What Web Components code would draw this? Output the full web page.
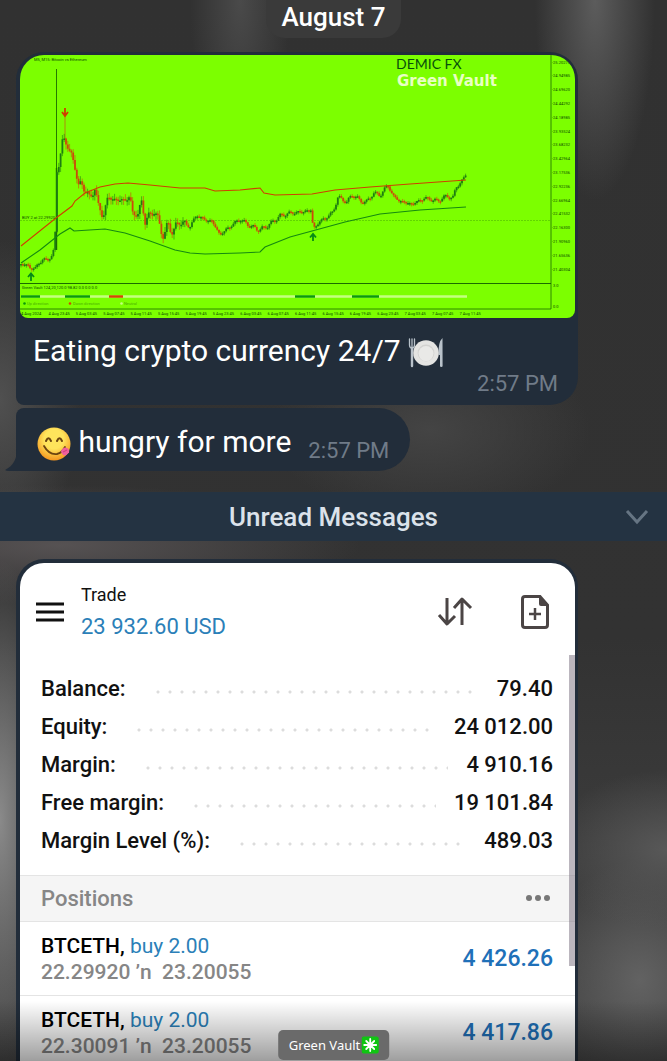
<!DOCTYPE html>
<html lang="en">
<head>
<meta charset="utf-8">
<meta name="viewport" content="width=device-width, initial-scale=1">
<title>Green Vault</title>
<style>
  body {
    margin: 0;
    height: 100vh;
    overflow: hidden;
    font-family: Roboto, "Liberation Sans", sans-serif;
    background: #333;
  }
</style>
</head>
<body>

<chat-screen>
  <chat-date>August 7</chat-date>

  <chat-bubble class="wide" time="2:57 PM">
    <price-chart slot="media"></price-chart>
    Eating crypto currency 24/7 <emoji-icon name="plate"></emoji-icon>
  </chat-bubble>

  <chat-bubble class="short" tail time="2:57 PM">
    <emoji-icon name="yum"></emoji-icon> hungry for more
  </chat-bubble>

  <unread-bar>Unread Messages</unread-bar>

  <trade-panel name="Trade" total="23 932.60 USD">
    <balance-row slot="balance" label="Balance:">79.40</balance-row>
    <balance-row slot="balance" label="Equity:">24 012.00</balance-row>
    <balance-row slot="balance" label="Margin:">4 910.16</balance-row>
    <balance-row slot="balance" label="Free margin:">19 101.84</balance-row>
    <balance-row slot="balance" label="Margin Level (%):">489.03</balance-row>
    <position-row symbol="BTCETH," side="buy 2.00" prices="22.29920 ’n&nbsp; 23.20055">4 426.26</position-row>
    <position-row symbol="BTCETH," side="buy 2.00" prices="22.30091 ’n&nbsp; 23.20055">4 417.86</position-row>
  </trade-panel>

  <caption-chip slot="overlay">Green Vault</caption-chip>
</chat-screen>

<script>
/* shared base: every element renders its own html into an open root */
class BaseElement extends HTMLElement {
  constructor() {
    super();
    this.shadow = this.attachShadow({mode: 'open'});
    this.shadow.innerHTML = this.render();
  }

  att(key) {
    return this.getAttribute(key) || '';
  }
}

class ChatScreen extends BaseElement {
  render() {
    return `
      <style>
        :host {
          display: block;
          position: relative;
          height: 100vh;
          overflow: hidden;
          background:
            radial-gradient(ellipse 50px 160px at 240px 0, #4a4a4a, transparent),
            radial-gradient(ellipse 60px 200px at 595px 0, #5c5c5c, transparent),
            radial-gradient(ellipse 120px 80px at 100% 850px, #585858, transparent),
            radial-gradient(ellipse 100px 120px at 640px 980px, #626262, transparent),
            radial-gradient(ellipse 60px 260px at 0 820px, #8a8a8a, transparent),
            radial-gradient(ellipse 300px 60px at 60px 545px, #565253, transparent),
            radial-gradient(ellipse 160px 90px at 430px 430px, #444, transparent),
            radial-gradient(ellipse 80px 160px at 0 400px, #505050, transparent),
            linear-gradient(#313131, #323232 60%, #454545);
        }
        .shade {
          position: absolute;
          inset: auto 0 0 0;
          height: 60px;
          background: linear-gradient(transparent, rgba(0, 0, 0, 0.38));
          pointer-events: none;
        }
      </style>
      <slot></slot>
      <div class="shade"></div>
      <slot name="overlay"></slot>
    `;
  }
}

class ChatDate extends BaseElement {
  render() {
    return `
      <style>
        :host {
          display: flex;
          justify-content: center;
          margin-bottom: 14px;
        }
        time {
          padding: 0 15px 4px;
          border-radius: 0 0 19px 19px;
          background: #3a3a3a;
          color: #fff;
          font-size: 26px;
          font-weight: 500;
          line-height: 34px;
        }
      </style>
      <time><slot></slot></time>
    `;
  }
}

class ChatBubble extends BaseElement {
  render() {
    return `
      <style>
        :host {
          display: flex;
          position: relative;
          box-sizing: border-box;
          margin-left: 16px;
          background: #222d3a;
          color: #fff;
          font-size: 30px;
          line-height: 34px;
        }
        :host(.wide) {
          flex-direction: column;
          margin-right: 89px;
          margin-bottom: 3px;
          padding: 3px 3px 7px 4px;
          border-radius: 28px 28px 28px 8px;
        }
        :host(.short) {
          width: fit-content;
          margin-bottom: 21px;
          padding: 17px 21px 12px;
          gap: 17px;
          border-radius: 8px 32px 32px 0;
        }
        :host(.wide) p { padding: 16px 13px 2px; }
        :host(.wide) time { align-self: flex-end; padding-right: 17px; }
        :host(.short) time { align-self: flex-end; margin-bottom: -6px; }
        p { margin: 0; }
        time {
          color: #707b88;
          font-size: 22px;
          line-height: 28px;
        }
        .tail {
          position: absolute;
          right: 100%;
          bottom: 0;
          margin-right: -1px;
          fill: #222d3a;
        }
      </style>
      <slot name="media"></slot>
      <p><slot></slot></p>
      <time>${this.att('time')}</time>
      ${this.hasAttribute('tail') ? `
        <svg class="tail" width="12" height="22"><path d="M12 0C12 10 8 17 0 21Q1 22 4 22H12Z"/></svg>` : ''}
    `;
  }
}

const EMOJI = {
  plate: `
    <svg width="36" height="32" viewBox="0 0 36 32">
      <g fill="none" stroke="#b9c2ca" stroke-linecap="round">
        <path d="M1.5 2V8Q1.5 11 4 11Q6.500 11 6.500 8V2M4 2V11" stroke-width="1.300"/>
        <path d="M4 11V29" stroke-width="2.400"/>
      </g>
      <path d="M34.500 1Q30 5 30.500 18H32V29Q32 30 33.300 30T34.600 29Z" fill="#b9c2ca"/>
      <circle cx="18" cy="16" r="12.800" fill="#e4e4e2"/>
      <circle cx="18" cy="16" r="8.400" fill="#d2d2d0"/>
      <circle cx="18" cy="16.600" r="7.500" fill="#e9e9e7"/>
    </svg>`,
  yum: `
    <svg width="34" height="34" viewBox="0 0 34 34">
      <defs>
        <radialGradient id="face" cx="50%" cy="35%" r="65%">
          <stop offset="0.450" stop-color="#ffe45c"/>
          <stop offset="1" stop-color="#f4961f"/>
        </radialGradient>
      </defs>
      <circle cx="17" cy="17" r="16.500" fill="url(#face)"/>
      <path d="M9 14Q11.500 8.500 14 14M20 14Q22.500 8.500 25 14" fill="none" stroke="#6b4410" stroke-width="2" stroke-linecap="round"/>
      <path d="M7 19Q12 28 20 27Q25 26 28 20" fill="none" stroke="#6b4410" stroke-width="1.800" stroke-linecap="round"/>
      <path d="M24 25Q24 22 28 20.500Q33 21 32 25.500Q29 29.500 26 28Z" fill="#f0609c"/>
      <path d="M26 25L30 23" stroke="#cf3d7c"/>
    </svg>`
};

class EmojiIcon extends BaseElement {
  render() {
    return `
      <style>
        :host { display: inline-block; vertical-align: middle; margin: -4px 0; line-height: 0; }
      </style>
      ${EMOJI[this.att('name')]}
    `;
  }
}

/* price path, one [x, y] per swing; candles are filled in between */
const PRICE = [
  [21,264],[28,265],[31,269],[35,269],[38,263],[44,260],[52,257],[54,250],[56,220],[57,170],[60,160],
  [63,140],[65,138],[67,142],[70,155],[73,160],[76,168],[78,187],[82,185],[86,190],[90,200],[95,187],
  [98,205],[103,217],[108,197],[115,200],[125,200],[130,197],[132,212],[138,215],[142,200],[145,222],
  [150,215],[154,210],[160,226],[164,237],[168,224],[173,232],[180,220],[185,225],[190,226],[197,215],
  [205,220],[212,221],[220,235],[228,228],[240,219],[250,226],[260,230],[270,224],[280,216],[290,213],
  [300,212],[311,210],[313,226],[315,228],[320,221],[327,217],[333,212],[338,197],[347,202],[353,194],
  [360,201],[367,202],[373,193],[380,195],[388,185],[393,196],[400,201],[412,204],[425,198],[437,201],
  [447,196],[453,198],[457,185],[463,181],[467,171]
];

const SCALE = [
  '25.20275', '24.94985', '24.69620', '24.44292', '24.18985', '23.93524', '23.68232', '23.42964',
  '23.17536', '22.92236', '22.66964', '22.41532', '22.16300', '21.90960', '21.65636', '21.40304'
];

const DATES = [
  '4 Aug 2024', '4 Aug 23:45', '5 Aug 03:45', '5 Aug 07:45', '5 Aug 11:45', '5 Aug 15:45', '5 Aug 19:45',
  '5 Aug 23:45', '6 Aug 03:45', '6 Aug 07:45', '6 Aug 11:45', '6 Aug 15:45', '6 Aug 19:45', '6 Aug 23:45',
  '7 Aug 03:45', '7 Aug 07:45', '7 Aug 11:45'
];

const UP = '#1d7d12';
const DOWN = '#cc4a0a';

class PriceChart extends BaseElement {
  candles() {
    let out = '', prev = PRICE[0][1], seg = 0, n = 0;
    for (let x = 21; x <= 467; x += 1.8) {
      while (seg < PRICE.length - 2 && PRICE[seg + 1][0] < x) seg++;
      const [x1, y1] = PRICE[seg];
      const [x2, y2] = PRICE[seg + 1];
      const rough = x > 58 && x < 185;
      const wobble = Math.sin(n * 1.3) * (rough ? 3 : 1.5) + Math.sin(n * 5.1) * (rough ? 2 : 1);
      const y = y1 + (y2 - y1) * (x - x1) / (x2 - x1) + wobble;
      const color = y > prev ? DOWN : UP;
      const top = Math.min(y, prev);
      const height = Math.max(Math.abs(y - prev), 1.5);
      const wick = rough ? 5 : 2;
      out += `<path d="M${x} ${top - wick * Math.abs(Math.sin(n))}V${top + height + wick * Math.abs(Math.cos(n))}" stroke="${color}" stroke-width="0.6"/>`;
      out += `<path d="M${x} ${top}v${height}" stroke="${color}" stroke-width="1.8"/>`;
      prev = y;
      n++;
    }
    return out;
  }

  render() {
    return `
      <style>
        :host { display: block; }
        svg {
          display: block;
          width: 100%;
          border-radius: 24px 24px 8px 8px;
          background: #7cff00;
        }
        .tiny { font-size: 4px; fill: #0b4a00; }
        .brand { font: 14px Lato, sans-serif; fill: #064f0c; }
        .vault { font: bold 15px "DejaVu Sans", sans-serif; fill: #e9ffc4; }
      </style>
      <svg viewBox="20 55 555 263" role="img" aria-label="BTCETH chart">
        <g fill="none" stroke="#1b6b00">
          <path d="M551 55V309M20 309H551" stroke-width="0.800"/>
          <path d="M20 283.500H551" stroke-width="1.200"/>
          <path d="M20 220.500H551" stroke="#4fb800" stroke-width="0.600" stroke-dasharray="2 1"/>
          <path d="M56.500 69V250" stroke-width="0.900"/>
          <path d="M56.500 168V250" stroke-width="1.400"/>
          <path d="M65 116V140" stroke="#b8700f" stroke-width="0.800"/>
        </g>
        ${this.candles()}
        <path fill="none" stroke="#cf3f00" stroke-width="1.100" d="M21 246L56 218L72 206L75 201L85 193L100 187L115 184L128 183L150 185L180 188L205 188L215 191L240 190L260 188L264 193L275 195L312 194L335 190L370 187L410 184L466 180"/>
        <path fill="none" stroke="#158a10" stroke-width="1.100" d="M21 263L40 250L60 234L70 228L74 231L105 229L125 233L150 241L175 250L190 253L205 254L240 253L260 252L265 247L290 237L312 231L345 222L380 214L420 210L466 207"/>
        <path d="M65 108V115M62 112L65 116L68 112" fill="none" stroke="#d13c00" stroke-width="1.800"/>
        <path d="M31 281V274M28 277L31 273.500L34 277M313 241V235M310 237.500L313 234L316 237.500" fill="none" stroke="#078a18" stroke-width="1.800"/>

        <path d="M21 296.500H467" stroke="#c4ff80" stroke-width="2.400"/>
        <path d="M21 296.500H40M65 296.500H90M295 296.500H315M352 296.500H379" stroke="#0a9a0a" stroke-width="2.600"/>
        <path d="M109 296.500H123" stroke="#d14a00" stroke-width="2.600"/>

        <g class="tiny">
          <text x="34" y="61">M5, M15:  Bitcoin vs Ethereum</text>
          <text x="22" y="219">BUY 2 at 22.29920</text>
          <text x="22" y="289">Green Vault 124,20,120.0 98.82 0.0 0.0 0.0</text>
          <circle cx="24.500" cy="303.500" r="1.300" fill="#0a9a0a"/>
          <text x="27" y="305" fill-opacity="0.500">Up direction</text>
          <circle cx="70" cy="303.500" r="1.300" fill="#d14a00"/>
          <text x="73" y="305" fill-opacity="0.500">Down direction</text>
          <circle cx="121.500" cy="303.500" r="1.300" fill="#c4ff80"/>
          <text x="124" y="305" fill-opacity="0.500">Neutral</text>
          ${SCALE.map((s, i) => `<text x="552" y="${63.5 + i * 13.8}">-${s}</text>`).join('')}
          <text x="553" y="287">3.0</text>
          <text x="553" y="308">0.0</text>
          ${DATES.map((d, i) => `<text x="${21 + i * 27.4}" y="315">${d}</text>`).join('')}
        </g>
        <text class="brand" x="396" y="69">DEMIC FX</text>
        <text class="vault" x="397" y="86">Green Vault</text>
      </svg>
    `;
  }
}

class UnreadBar extends BaseElement {
  render() {
    return `
      <style>
        :host {
          display: grid;
          grid-template-columns: 1fr auto 1fr;
          align-items: center;
          margin-bottom: 18px;
          padding: 0 18px;
          height: 49px;
          background: #243342;
          color: #dbe2ea;
          font-size: 26px;
          font-weight: 500;
        }
        span { grid-column: 2; }
        button {
          justify-self: end;
          padding: 0;
          border: 0;
          background: none;
          line-height: 0;
          cursor: pointer;
        }
      </style>
      <span><slot></slot></span>
      <button type="button" aria-label="Jump to latest">
        <svg width="24" height="16" viewBox="0 0 24 16"><path d="M2 2L12 13L22 2" fill="none" stroke="#667583" stroke-width="3"/></svg>
      </button>
    `;
  }
}

class TradePanel extends BaseElement {
  render() {
    return `
      <style>
        :host {
          display: block;
          position: relative;
          margin: 0 89px 0 16px;
          padding: 4px 3px 0 4px;
          border-radius: 28px 28px 0 0;
          background: #222d3a;
          color: #111;
        }
        section {
          overflow: hidden;
          border-radius: 24px 24px 0 0;
          background: #fff;
        }
        header {
          display: flex;
          align-items: flex-start;
          height: 86px;
          padding: 20px 26px 0 16px;
          gap: 17px;
        }
        h2, h3, p { margin: 0; font-weight: 400; }
        h2 { font-size: 18px; line-height: 24px; }
        header p { padding-top: 5px; color: #2b7fb8; font-size: 22px; line-height: 30px; }
        header > div { flex: 1; }
        button {
          padding: 0;
          border: 0;
          background: none;
          line-height: 0;
          cursor: pointer;
        }
        .menu { padding-top: 18px; }
        .sort { padding: 13px 31px 0 0; }
        .new { padding-top: 11px; }
        .balances { padding: 0 22px 16px 21px; }
        .bar {
          display: flex;
          justify-content: space-between;
          align-items: center;
          height: 44px;
          padding: 1px 24px 0 21px;
          box-sizing: content-box;
          border: solid #e4e4e4;
          border-width: 1px 0;
          background: #f5f5f5;
          color: #868686;
        }
        h3 { font-size: 22px; font-weight: 500; line-height: 26px; }
        .thumb {
          position: absolute;
          top: 96px;
          right: 3px;
          width: 6px;
          height: 311px;
          background: rgba(120, 110, 125, 0.5);
        }
      </style>
      <section>
        <header>
          <button class="menu" type="button" aria-label="Menu">
            <svg width="28" height="22"><path d="M0 3H28M0 11H28M0 19H28" stroke="#111" stroke-width="3"/></svg>
          </button>
          <div>
            <h2>${this.att('name')}</h2>
            <p>${this.att('total')}</p>
          </div>
          <button class="sort" type="button" aria-label="Sort">
            <svg width="36" height="32" viewBox="0 0 36 32"><path d="M10 2V28M2 19L10 28L18 20M25 29V3M17 12L25 3L34 12" fill="none" stroke="#4b4545" stroke-width="3" stroke-linejoin="round"/></svg>
          </button>
          <button class="new" type="button" aria-label="New order">
            <svg width="28" height="36" viewBox="0 0 28 36">
              <path d="M4 2.500H19L26.500 11V31Q26.500 33.500 24 33.500H4Q1.500 33.500 1.500 31V5Q1.500 2.500 4 2.500Z" fill="none" stroke="#4b4545" stroke-width="3"/>
              <path d="M18 2L27 12H20Q18 12 18 10Z" fill="#4b4545"/>
              <path d="M8 20H20M14 14V26" stroke="#4b4545" stroke-width="2.500"/>
            </svg>
          </button>
        </header>
        <div class="balances"><slot name="balance"></slot></div>
        <div class="bar">
          <h3>Positions</h3>
          <button type="button" aria-label="More">
            <svg width="26" height="8" fill="#777"><circle cx="4" cy="3" r="3"/><circle cx="13" cy="3" r="3"/><circle cx="22" cy="3" r="3"/></svg>
          </button>
        </div>
        <slot></slot>
      </section>
      <div class="thumb"></div>
    `;
  }
}

class BalanceRow extends BaseElement {
  render() {
    return `
      <style>
        :host {
          display: flex;
          align-items: center;
          height: 38px;
          font-size: 22px;
          font-weight: 500;
        }
        /* dotted leader between the label and its value */
        i {
          flex: 1;
          height: 4px;
          margin: 7px 18px 0 26px;
          background: radial-gradient(circle, #dcdcdc 1px, transparent 2px) 0 0 / 12px 4px repeat-x;
        }
      </style>
      <span>${this.att('label')}</span><i></i><span><slot></slot></span>
    `;
  }
}

class PositionRow extends BaseElement {
  render() {
    return `
      <style>
        :host {
          display: flex;
          justify-content: space-between;
          align-items: center;
          padding: 11px 22px 10px 21px;
          border-bottom: 1px solid #e4e4e4;
          font-size: 21px;
          line-height: 26px;
        }
        b { color: #000; font-weight: 500; }
        .side { color: #2b7fb8; }
        .prices { color: #868686; font-weight: 500; }
        strong { color: #2070b8; font-size: 23px; font-weight: 500; }
      </style>
      <div>
        <div><b>${this.att('symbol')}</b> <span class="side">${this.att('side')}</span></div>
        <div class="prices">${this.att('prices')}</div>
      </div>
      <strong><slot></slot></strong>
    `;
  }
}

class CaptionChip extends BaseElement {
  render() {
    return `
      <style>
        :host {
          position: absolute;
          left: 50%;
          bottom: 1px;
          transform: translateX(-50%);
          display: flex;
          align-items: center;
          gap: 1px;
          padding: 0 10px 0 11px;
          border-radius: 5px;
          background: #6a6a6a;
          color: #fff;
          font: 13px/30px "Noto Sans", sans-serif;
          white-space: nowrap;
        }
      </style>
      <slot></slot>
      <svg width="18" height="18" viewBox="0 0 18 18">
        <rect x="0.500" y="0.500" width="17" height="17" rx="2" fill="#0fc512"/>
        <path d="M9 3V15M3 9H15M5 5L13 13M13 5L5 13" stroke="#fff" stroke-width="1.800" stroke-linecap="round"/>
      </svg>
    `;
  }
}

customElements.define('chat-screen', ChatScreen);
customElements.define('chat-date', ChatDate);
customElements.define('emoji-icon', EmojiIcon);
customElements.define('chat-bubble', ChatBubble);
customElements.define('price-chart', PriceChart);
customElements.define('unread-bar', UnreadBar);
customElements.define('trade-panel', TradePanel);
customElements.define('balance-row', BalanceRow);
customElements.define('position-row', PositionRow);
customElements.define('caption-chip', CaptionChip);
</script>
</body>
</html>
